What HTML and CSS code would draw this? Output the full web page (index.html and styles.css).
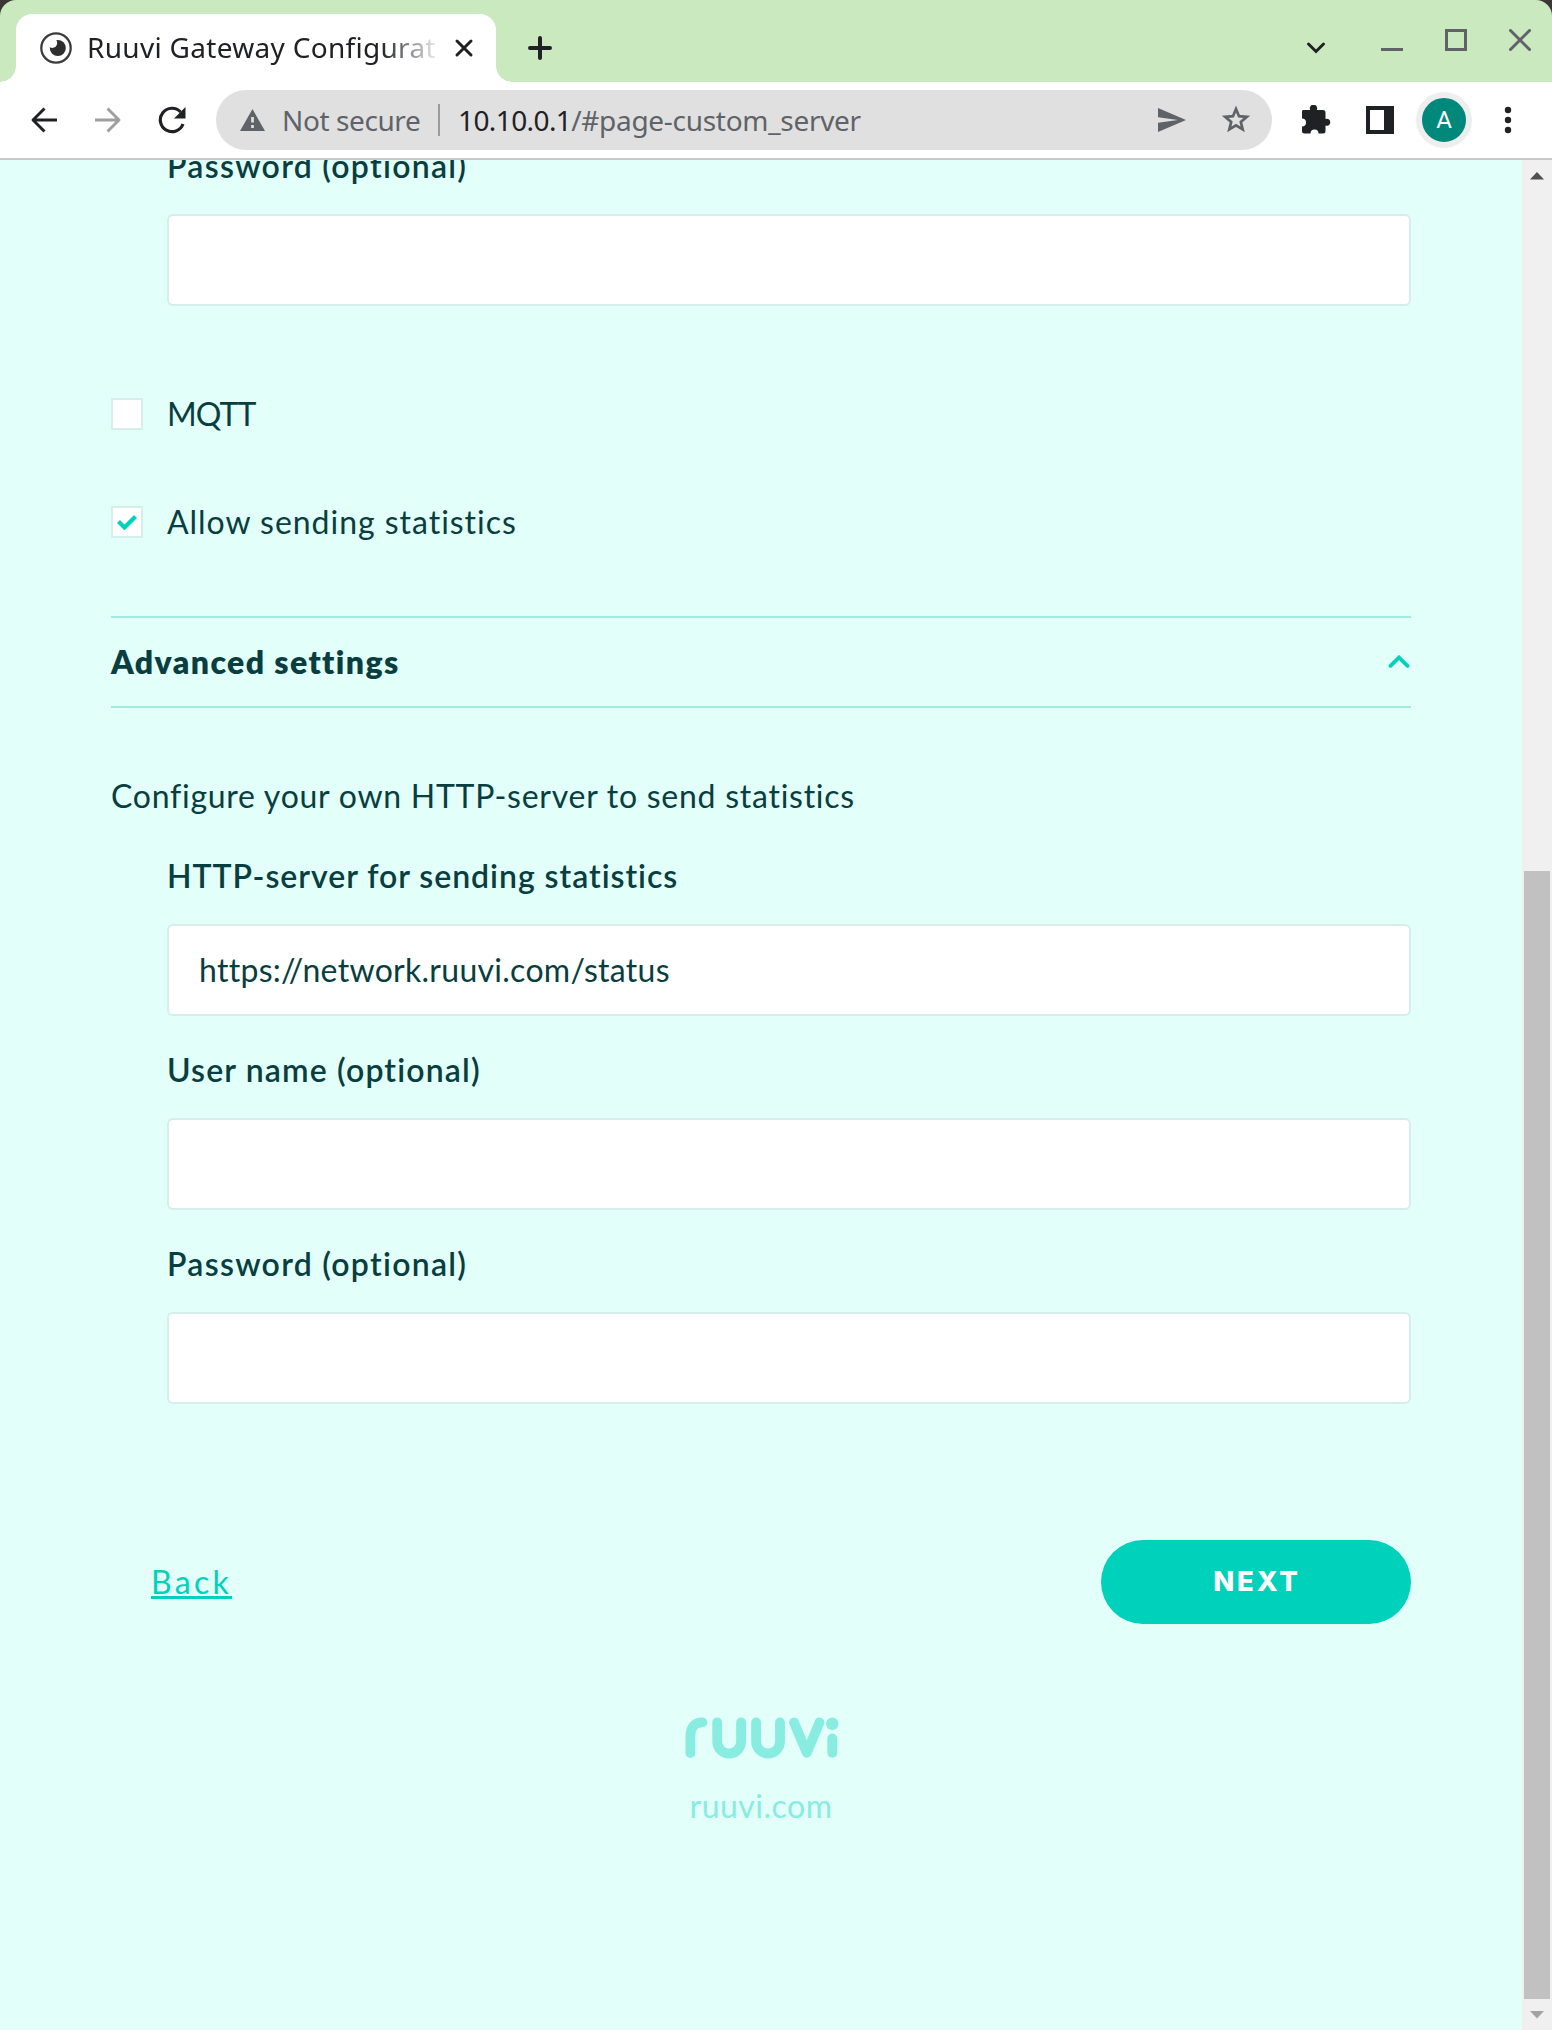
FILE: index.html
```html
<!DOCTYPE html>
<html lang="en">
<head>
<meta charset="utf-8">
<title>Ruuvi Gateway Configuration</title>
<link rel="stylesheet" href="styles.css">
</head>
<body>
<div class="window">
  <header class="tabstrip">
    <div class="tab">
      <svg class="favicon" width="32" height="32" viewBox="0 0 32 32"><circle cx="16" cy="16" r="14.700" fill="#fff" stroke="#3c3c3c" stroke-width="2.300"/><circle cx="17.800" cy="16" r="8" fill="#2e2e2e"/><circle cx="12.200" cy="11" r="5" fill="#fff"/></svg>
      <span class="tab-title">Ruuvi Gateway Configuration</span>
      <svg class="tab-close" width="20" height="20" viewBox="0 0 20 20"><path d="M3 3l14 14M17 3L3 17" stroke="#202124" stroke-width="3" stroke-linecap="round"/></svg>
    </div>
    <svg class="new-tab" width="26" height="26" viewBox="0 0 26 26"><path d="M13 3v20M3 13h20" stroke="#202124" stroke-width="4" stroke-linecap="round"/></svg>
    <div class="window-controls">
      <svg class="tab-search" width="20" height="14" viewBox="0 0 20 14"><path d="M2.500 3l7.500 7.500L17.500 3" fill="none" stroke="#202124" stroke-width="3" stroke-linecap="round"/></svg>
      <svg width="22" height="22" viewBox="0 0 22 22"><path d="M0 20.500h22" stroke="#5f6368" stroke-width="3"/></svg>
      <svg width="22" height="22" viewBox="0 0 22 22"><rect x="1.500" y="1.500" width="19" height="19" fill="none" stroke="#5f6368" stroke-width="3"/></svg>
      <svg width="22" height="22" viewBox="0 0 22 22"><path d="M1.500 1.500l19 19M20.500 1.500l-19 19" stroke="#5f6368" stroke-width="3" stroke-linecap="round"/></svg>
    </div>
  </header>
  <div class="toolbar">
    <svg width="28" height="28" viewBox="0 0 28 28"><path d="M27 14H3.500M14.500 2.500L3 14l11.500 11.500" fill="none" stroke="#202124" stroke-width="2.900" stroke-linejoin="round"/></svg>
    <svg class="forward-icon" width="28" height="28" viewBox="0 0 28 28"><path d="M1 14h23.500M13.500 2.500L25 14 13.500 25.500" fill="none" stroke="#9e9e9f" stroke-width="2.900" stroke-linejoin="round"/></svg>
    <svg class="reload-icon" width="28" height="28" viewBox="0 0 28 28"><path d="M22.600 6A11.700 11.700 0 1 0 25 18" fill="none" stroke="#202124" stroke-width="3.200"/><path d="M27.500 1v11.500H16z" fill="#202124"/></svg>
    <div class="omnibox">
      <svg width="25" height="22" viewBox="0 0 24 22" preserveAspectRatio="none"><path d="M12 0l12 22H0z" fill="#5f6368"/><path d="M12 8v5.500M12 16v3" stroke="#e0e0e0" stroke-width="2.600"/></svg>
      <span class="not-secure">Not secure</span>
      <span class="divider"></span>
      <span class="host">10.10.0.1</span><span class="path">/#page-custom_server</span>
      <svg class="send" width="28" height="26" viewBox="0 0 28 26"><path d="M0 1l28 12L0 25v-9.200L20 13 0 10.200z" fill="#5f6368"/></svg>
      <svg class="star" width="30" height="30" viewBox="0 0 30 30"><path d="M15 4l3 7.200 7.800.6-6 5.100 1.900 7.600L15 20.400l-6.700 4.100 1.900-7.600-6-5.100 7.800-.6z" fill="none" stroke="#5f6368" stroke-width="2.700"/></svg>
    </div>
    <svg class="extensions" width="30" height="30" viewBox="0 0 30 30"><path d="M2 5h7.200a3.700 3.700 0 1 1 6.600 0H22q2.500 0 2.500 2.500V14a3.500 3.500 0 1 1 0 6.500V26q0 2.500-2.500 2.500h-4.500a4 4 0 1 0-8 0H3.500Q1 28.500 1 26v-4.500a4 4 0 1 0 0-8V6.500Q1 5 2 5z" fill="#202124"/></svg>
    <svg class="sidepanel" width="28" height="28" viewBox="0 0 28 28"><path fill-rule="evenodd" d="M0 0h28v28H0zM4 4v20h14V4z" fill="#202124"/></svg>
    <div class="avatar"><span class="avatar-letter">A</span></div>
    <svg class="menu" width="8" height="28" viewBox="0 0 8 28"><g fill="#202124"><circle cx="4" cy="4" r="3.200"/><circle cx="4" cy="14" r="3.200"/><circle cx="4" cy="24" r="3.200"/></g></svg>
  </div>
  <div class="viewport">
    <main class="page">
      <section class="fields first">
        <label class="field-label">Password (optional)</label>
        <div class="field"></div>
      </section>
      <div class="check-row mqtt"><span class="box"></span><span class="check-label tight">MQTT</span></div>
      <div class="check-row stats"><span class="box"><svg width="20" height="16" viewBox="0 0 20 16"><path d="M1.500 7.500l6 6L18.500 2.500" fill="none" stroke="#00d1ba" stroke-width="4.200"/></svg></span><span class="check-label spaced">Allow sending statistics</span></div>
      <div class="advanced"><h2 class="advanced-title">Advanced settings</h2><svg class="chevron" width="22" height="14" viewBox="0 0 22 14"><path d="M2.500 10.800L11 2.500l8.500 8.300" fill="none" stroke="#00d1ba" stroke-width="3.800" stroke-linecap="round"/></svg></div>
      <p class="intro">Configure your own HTTP-server to send statistics</p>
      <section class="fields">
        <label class="field-label long">HTTP-server for sending statistics</label>
        <div class="field">https://network.ruuvi.com/status</div>
        <label class="field-label user">User name (optional)</label>
        <div class="field"></div>
        <label class="field-label">Password (optional)</label>
        <div class="field"></div>
      </section>
      <nav class="actions"><a class="back">Back</a><button class="next">NEXT</button></nav>
      <footer class="footer">
        <svg class="logo" width="154" height="42" viewBox="0 0 154 42" fill="none" stroke="#88ece0" stroke-width="9.800" stroke-linecap="round" stroke-linejoin="round"><path d="M5.400 36V19Q5.400 5.600 17.500 5.400"/><path d="M32.200 5.400v19.200a11.900 11.900 0 0 0 23.900 0V5.400"/><path d="M71.100 5.400v19.200a11.900 11.900 0 0 0 23.900 0V5.400"/><path d="M109 5.400l12.800 30.400 12.700-30.400"/><path d="M147.300 21.500v14.400"/><circle cx="147.300" cy="6.800" r="6.200" fill="#88ece0" stroke="none"/></svg>
        <a class="site">ruuvi.com</a>
      </footer>
    </main>
    <div class="scrollbar">
      <svg width="14" height="8" viewBox="0 0 14 8"><path d="M7 0l7 7.500H0z" fill="#505050"/></svg>
      <span class="thumb"></span>
      <svg width="14" height="8" viewBox="0 0 14 8"><path d="M7 7.500L0 0h14z" fill="#a3a3a3"/></svg>
    </div>
  </div>
</div>
</body>
</html>
```
FILE: styles.css
```css
* { box-sizing: border-box; }
body { margin: 0; background: #3a3735; }
svg { display: block; flex: none; }
.window { width: 1552px; height: 2030px; display: flex; flex-direction: column; overflow: hidden; border-radius: 16px 16px 0 0; font-family: "Noto Sans", sans-serif; font-size: 28px; color: #202124; }

.tabstrip { height: 82px; flex: none; background: #cbe9bf; display: flex; align-items: flex-start; padding-left: 16px; }
.tab { position: relative; width: 480px; height: 68px; margin-top: 14px; background: #fff; border-radius: 16px 16px 0 0; display: flex; align-items: center; padding-left: 24px; }
.tab::before, .tab::after { content: ""; position: absolute; bottom: 0; width: 16px; height: 16px; }
.tab::before { left: -16px; background: radial-gradient(circle at 0 0, transparent 15.5px, #fff 16px); }
.tab::after { right: -16px; background: radial-gradient(circle at 100% 0, transparent 15.5px, #fff 16px); }
.tab-title { width: 352px; margin-left: 14px; padding-left: 1px; margin-bottom: 2px; overflow: hidden; white-space: nowrap; letter-spacing: 0.3px; line-height: 40px; -webkit-mask-image: linear-gradient(90deg, #000 295px, transparent 355px); mask-image: linear-gradient(90deg, #000 295px, transparent 355px); }
.tab-close { margin-left: 16px; }
.new-tab { margin: 35px 0 0 31px; }
.window-controls { display: flex; gap: 42px; margin: 29px 21px 0 auto; }
.tab-search { margin: 12px 13px 0 0; }

.toolbar { height: 78px; flex: none; border-bottom: 2px solid #c9c9c9; background: #fff; display: flex; align-items: center; padding-left: 30px; }
.forward-icon { margin-left: 36px; }
.reload-icon { margin-left: 36px; }
.omnibox { width: 1056px; height: 60px; margin-left: 30px; border-radius: 30px; background: #e0e0e0; display: flex; align-items: center; padding-left: 24px; line-height: 40px; }
.not-secure { margin-left: 17px; width: 156px; color: #5f6368; letter-spacing: -0.4px; white-space: nowrap; }
.divider { width: 2px; height: 32px; background: #9b9b9b; margin-right: 18px; }
.host { letter-spacing: -0.6px; }
.path { color: #5f6368; letter-spacing: -0.3px; }
.send { margin-left: auto; }
.star { margin: 0 21px 0 35px; }
.extensions { margin-left: 29px; }
.sidepanel { margin-left: 35px; }
.avatar { width: 56px; height: 56px; margin-left: 22px; border-radius: 50%; border: 6px solid #eee; background: #00897b; display: flex; align-items: center; justify-content: center; }
.avatar-letter { font: 24px/44px Roboto, sans-serif; color: #fff; }
.menu { margin-left: 32px; }

.viewport { flex: 1; min-height: 0; display: flex; background: #e2fff9; }
.page { flex: 1; overflow: hidden; padding: 0 111px; display: flex; flex-direction: column; font: 32px/40px Lato, sans-serif; color: #083e40; }
.fields { margin-left: 56px; display: flex; flex-direction: column; }
.first { margin-top: -14px; }
.field-label { font-weight: 600; letter-spacing: 1.28px; }
.user { letter-spacing: 1.15px; }
.long { letter-spacing: 0.96px; }
.field { height: 92px; margin-top: 28px; padding: 24px 30px; border: 2px solid #d6eeea; border-radius: 6px; background: #fff; letter-spacing: 0.28px; }
.field + .field-label { margin-top: 34px; }
.check-row { display: flex; align-items: center; gap: 24px; }
.mqtt { margin-top: 88px; }
.stats { margin-top: 68px; }
.box { width: 32px; height: 32px; border: 2px solid #d6eeea; background: #fff; display: flex; align-items: center; justify-content: center; }
.tight { letter-spacing: -0.9px; }
.spaced { letter-spacing: 0.97px; }
.advanced { height: 92px; margin-top: 74px; border: solid #a4e9e0; border-width: 2px 0; display: flex; align-items: center; justify-content: space-between; }
.advanced-title { margin: 0; font: 800 32px/40px Lato, sans-serif; letter-spacing: 1.4px; }
.chevron { margin-right: 1px; }
.intro { margin: 68px 0 40px; letter-spacing: 0.74px; white-space: nowrap; }
.actions { margin-top: 136px; padding-left: 40px; display: flex; align-items: center; justify-content: space-between; }
.back { color: #00d1ba; letter-spacing: 3.3px; text-decoration: underline; text-decoration-thickness: 3px; text-underline-offset: 2px; text-decoration-skip-ink: none; }
.next { width: 310px; height: 84px; border: 0; border-radius: 42px; padding: 0 0 2px 2px; background: #00d1ba; color: #fff; font: 800 27.5px/82px Inter, sans-serif; letter-spacing: 2.8px; }
.footer { margin-top: 93px; display: flex; flex-direction: column; align-items: center; color: #88ece0; }
.logo { margin-left: 2px; }
.site { margin-top: 27px; letter-spacing: 0.5px; }

.scrollbar { width: 30px; background: #f0f0f0; display: flex; flex-direction: column; align-items: center; padding: 12px 0 11px; }
.thumb { width: 26px; height: 1128px; background: #c1c1c1; margin: 691px 0 12px; }
```
